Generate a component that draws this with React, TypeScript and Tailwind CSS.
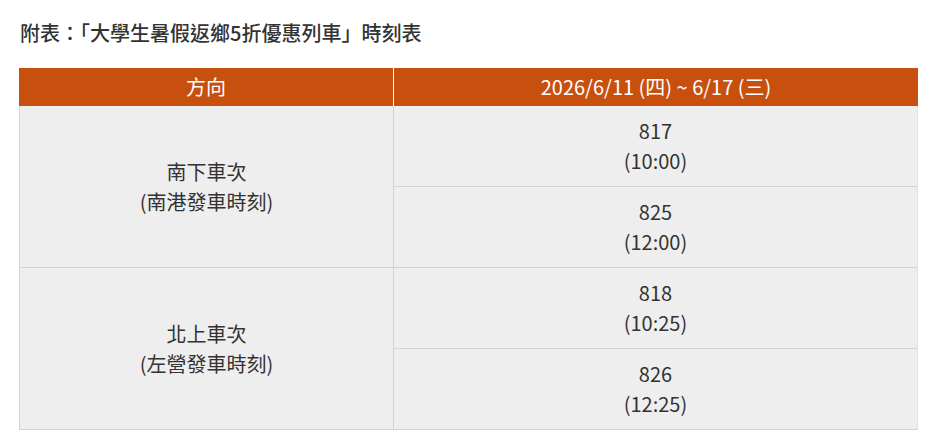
const rows = [
  {
    dir: "南下車次",
    sub: "(南港發車時刻)",
    trains: [
      { no: "817", time: "(10:00)" },
      { no: "825", time: "(12:00)" },
    ],
  },
  {
    dir: "北上車次",
    sub: "(左營發車時刻)",
    trains: [
      { no: "818", time: "(10:25)" },
      { no: "826", time: "(12:25)" },
    ],
  },
];

const App = () => {
  return (
    <main
      className="w-[936px] h-[445px] bg-white px-[19px] pt-[20px] text-[#333]"
      style={{ fontFamily: '"Noto Sans CJK TC", "Noto Sans", sans-serif' }}
    >
      <h2 className="text-[20px] font-medium leading-[26px] pl-[1px]">
        附表：「大學生暑假返鄉5折優惠列車」時刻表
      </h2>
      <div className="mt-[22px] w-[899px] text-[20px] leading-[30px] text-center">
        <div className="flex h-[38px] bg-[#c8500f] text-white items-center">
          <div className="w-[375px] h-full flex items-center justify-center border-r border-white">
            方向
          </div>
          <div className="flex-1">2026/6/11 (四) ~ 6/17 (三)</div>
        </div>
        {rows.map((r) => (
          <div key={r.dir} className="flex bg-[#eeeeee]">
            <div className="w-[374px] flex flex-col items-center justify-center border-l border-b border-[#d3d3d3]">
              <div>{r.dir}</div>
              <div>{r.sub}</div>
            </div>
            <div className="flex-1 flex flex-col border-l border-r border-l-[#d3d3d3] border-r-[#e2e2e2]">
              {r.trains.map((t) => (
                <div
                  key={t.no}
                  className="h-[81px] flex flex-col items-center justify-center border-b border-[#d3d3d3]"
                >
                  <div>{t.no}</div>
                  <div>{t.time}</div>
                </div>
              ))}
            </div>
          </div>
        ))}
      </div>
    </main>
  );
};

export default App;
